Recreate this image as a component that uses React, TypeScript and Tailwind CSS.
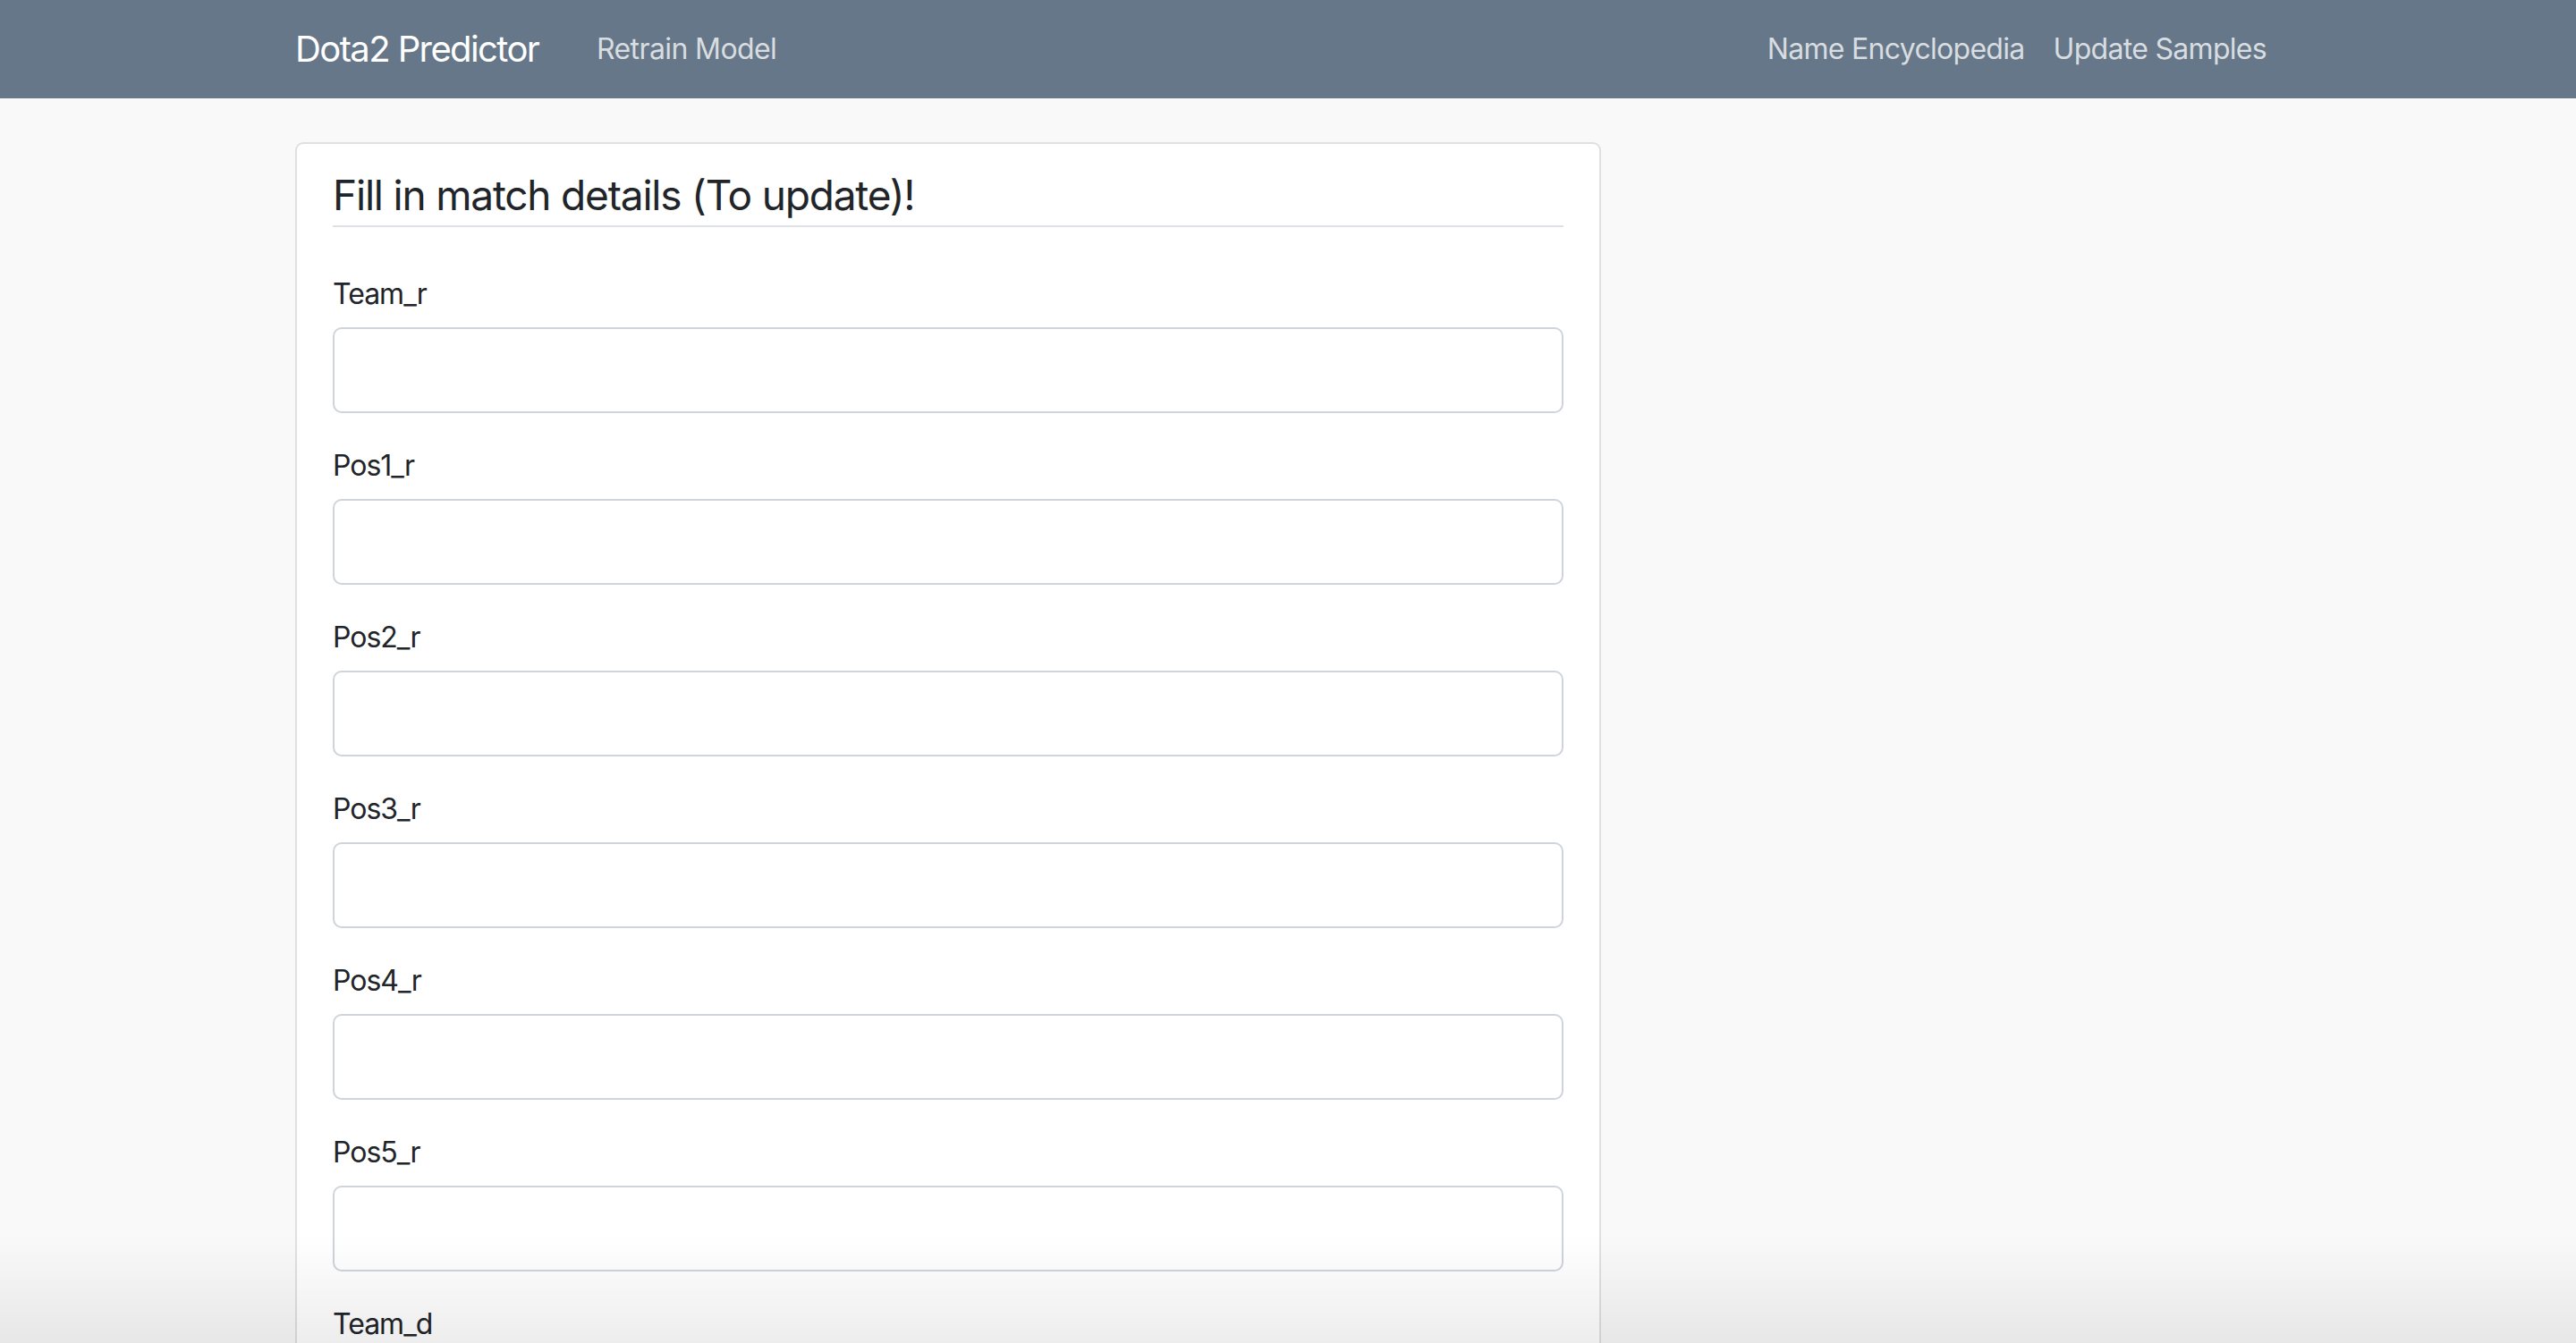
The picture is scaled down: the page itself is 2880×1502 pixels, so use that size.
const fields = ["Team_r", "Pos1_r", "Pos2_r", "Pos3_r", "Pos4_r", "Pos5_r", "Team_d", "Pos1_d", "Pos2_d", "Pos3_d", "Pos4_d", "Pos5_d"];

export default function App() {
  return (
    <div className="relative w-full min-h-screen bg-[#f9f9f9] font-['Inter','Noto_Sans',sans-serif] text-[#212529]">
      {/* Navbar */}
      <nav className="w-full h-[110px] bg-[#667789]">
        <div className="h-full flex items-center px-[330px]">
          <div className="w-[321px] text-[40px] leading-[60px] text-white tracking-[-1.6px]">Dota2 Predictor</div>
          <a className="px-4 text-[32px] leading-[48px] text-white/75 tracking-[-0.6px]">Retrain Model</a>
          <div className="ml-auto flex items-center">
            <a className="px-4 text-[32px] leading-[48px] text-white/75 tracking-[-0.7px]">Name Encyclopedia</a>
            <a className="px-4 text-[32px] leading-[48px] text-white/75 tracking-[-0.7px]">Update Samples</a>
          </div>
        </div>
      </nav>

      {/* Form card */}
      <main className="px-[330px] pt-[49px] pb-12">
        <div className="w-[1460px] bg-white border-2 border-[#e0e0e0] rounded-[9px] px-[40px] pt-[28px] pb-8">
          <h3 className="text-[46px] leading-[58px] pb-[5px] border-b-2 border-[#dee2e6] mb-[48px] tracking-[-1.2px]">
            Fill in match details (To update)!
          </h3>
          {fields.map((f) => (
            <div key={f} className="mb-[32px]">
              <label className="block text-[32px] leading-[48px] pt-[3px] mb-[13px] tracking-[-1px]">{f}</label>
              <input
                type="text"
                className="block w-full h-[96px] bg-white border-2 border-[#ced4da] rounded-[10px] px-6 text-[36px] outline-none"
              />
            </div>
          ))}
        </div>
      </main>

      {/* screenshot window shadow at the bottom edge */}
      <div className="pointer-events-none fixed left-0 right-0 bottom-0 h-[120px] bg-gradient-to-b from-transparent to-black/[0.07]" />
    </div>
  );
}
